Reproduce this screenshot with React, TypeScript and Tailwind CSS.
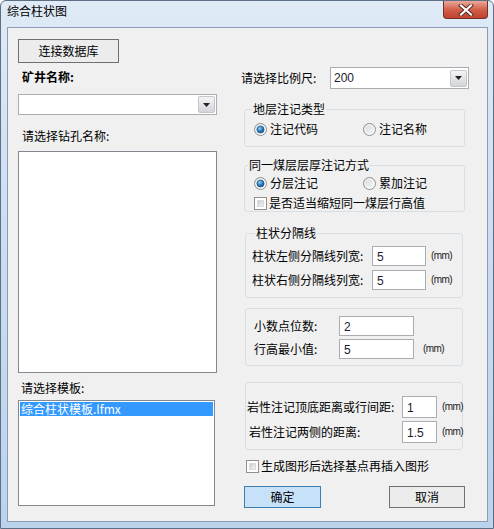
import React from "react";

const F = "font-['Noto_Sans_CJK_SC',sans-serif]";

function Radio({ checked }: { checked?: boolean }) {
  return (
    <svg width="13" height="13" viewBox="0 0 13 13" className="shrink-0">
      <defs>
        <linearGradient id="rg" x1="0" y1="0" x2="1" y2="1">
          <stop offset="0" stopColor="#d4d6d8" />
          <stop offset="1" stopColor="#fbfbfb" />
        </linearGradient>
        <radialGradient id="rb" cx="0.4" cy="0.35" r="0.7">
          <stop offset="0" stopColor="#9fd6f7" />
          <stop offset="0.5" stopColor="#2a7fc0" />
          <stop offset="1" stopColor="#1b4f7c" />
        </radialGradient>
      </defs>
      <circle cx="6.5" cy="6.5" r="6" fill="url(#rg)" stroke="#8d8f91" strokeWidth="1" />
      <circle cx="6.5" cy="6.5" r="4.6" fill="none" stroke="#ffffff" strokeWidth="0.8" />
      {checked && <circle cx="6.5" cy="6.5" r="3.6" fill="url(#rb)" stroke="#1c4f7d" strokeWidth="0.6" />}
    </svg>
  );
}

function Check() {
  return (
    <span className="w-[13px] h-[13px] shrink-0 border border-[#8f8f8f] bg-white p-[2px] flex">
      <span className="flex-1 bg-gradient-to-br from-[#c9ccd1] to-[#f4f4f4] border border-[#dadada]" />
    </span>
  );
}

function DropBtn() {
  return (
    <span className="w-[17px] h-[17px] shrink-0 rounded-[2px] border border-[#c3c6cb] bg-gradient-to-b from-[#f4f4f5] to-[#d3d5da] flex items-center justify-center">
      <svg width="7" height="4" viewBox="0 0 7 4">
        <path d="M0 0 H7 L3.5 4 Z" fill="#222" />
      </svg>
    </span>
  );
}

function Field({ value, w, h = 19 }: { value: string; w: number; h?: number }) {
  return (
    <div
      className="shrink-0 border border-[#abadb3] bg-white flex items-center pl-[4px] pt-[2px] text-[12px] font-['Liberation_Sans',sans-serif] text-[#1a1a2e]"
      style={{ width: w, height: h }}
    >
      {value}
    </div>
  );
}

function MM({ ml }: { ml: number }) {
  return (
    <span
      className="shrink-0 text-[10px] leading-[12px] tracking-[-0.6px] font-['Liberation_Sans',sans-serif] text-[#222]"
      style={{ marginLeft: ml }}
    >
      (mm)
    </span>
  );
}

export default function App() {
  return (
    <div className={`w-[494px] h-[529px] relative overflow-hidden bg-gradient-to-b from-[#dfeaf6] via-[#c9dcf1] to-[#bcd3ec] border border-[#5d6f84] rounded-t-[6px] ${F} text-[12px] text-black`}>
      {/* title bar */}
      <div className="h-[26px] flex items-start justify-between">
        <div className="pl-[6px] pt-[2px] leading-[16px] text-[12px]">综合柱状图</div>
        <div className="mr-[5px] w-[45px] h-[18px] rounded-b-[4px] border border-t-0 border-[#70332a] bg-gradient-to-b from-[#e9a99b] via-[#d2604b] to-[#c0422c] flex items-center justify-center">
          <svg width="16" height="12" viewBox="0 0 16 12">
            <path d="M3 1.5 L13 10.5 M13 1.5 L3 10.5" stroke="#5a241c" strokeWidth="4" strokeLinecap="square" />
            <path d="M3 1.5 L13 10.5 M13 1.5 L3 10.5" stroke="#ffffff" strokeWidth="2.2" strokeLinecap="square" />
          </svg>
        </div>
      </div>
      {/* client */}
      <div className="ml-[6px] w-[481px] h-[495px] border border-[#8a9db5] bg-[#f0f0f0] flex">
        {/* left column */}
        <div className="pl-[10px] w-[220px] shrink-0 flex flex-col pt-[11px]">
          <div className="w-[101px] h-[24px] border border-[#707070] bg-[#ececec] flex items-center justify-center leading-[16px]">
            连接数据库
          </div>
          <div className="mt-[6px] h-[16px] leading-[16px] pl-[4px] font-bold">矿井名称:</div>
          <div className="mt-[9px] w-[199px] h-[21px] border border-[#abadb3] bg-white flex items-center justify-end pr-[1px]">
            <DropBtn />
          </div>
          <div className="mt-[13px] h-[16px] leading-[16px] pl-[4px]">请选择钻孔名称:</div>
          <div className="mt-[7px] w-[199px] h-[222px] border border-[#828790] bg-white" />
          <div className="mt-[7px] h-[16px] leading-[16px] pl-[3px]">请选择模板:</div>
          <div className="mt-[4px] w-[197px] h-[106px] border border-[#828790] bg-white p-[1px]">
            <div className="h-[14px] bg-[#3399ff] text-white leading-[14px] pl-[1px] text-[12px]">综合柱状模板.lfmx</div>
          </div>
        </div>
        {/* right column */}
        <div className="ml-[13px] w-[228px] shrink-0 flex flex-col pt-[39px]">
          <div className="flex items-center justify-between h-[22px]">
            <span className="leading-[16px]">请选择比例尺:</span>
            <div className="w-[139px] h-[22px] border border-[#abadb3] bg-white flex items-center justify-between pl-[3px] pr-[1px]">
              <span className="font-['Liberation_Sans',sans-serif] text-[12px] text-[#1a1a2e]">200</span>
              <DropBtn />
            </div>
          </div>

          <fieldset className="ml-[3px] mt-[12px] w-[221px] h-[46px] border border-[#d5dfe5] rounded-[3px] px-[9px]">
            <legend className="px-[1px] -ml-[2px] leading-[16px]">地层注记类型</legend>
            <div className="flex items-center h-[16px] mt-[4px]">
              <span className="flex items-center gap-[3px] w-[109px]"><Radio checked />注记代码</span>
              <span className="flex items-center gap-[3px]"><Radio />注记名称</span>
            </div>
          </fieldset>

          <fieldset className="ml-[3px] mt-[10px] w-[221px] h-[55px] border border-[#d5dfe5] rounded-[3px] px-[9px]">
            <legend className="px-[1px] -ml-[6px] leading-[16px]">同一煤层层厚注记方式</legend>
            <div className="flex items-center h-[16px] mt-[2px]">
              <span className="flex items-center gap-[3px] w-[109px]"><Radio checked />分层注记</span>
              <span className="flex items-center gap-[3px]"><Radio />累加注记</span>
            </div>
            <div className="flex items-center h-[16px] mt-[4px] gap-[2px]">
              <Check />是否适当缩短同一煤层行高值
            </div>
          </fieldset>

          <fieldset className="ml-[4px] mt-[13px] w-[218px] h-[73px] border border-[#d5dfe5] rounded-[3px] pl-[6px]">
            <legend className="px-[1px] ml-[3px] leading-[16px]">柱状分隔线</legend>
            <div className="flex items-center mt-[5px]">
              <span className="w-[120px] shrink-0">柱状左侧分隔线列宽:</span>
              <Field value="5" w={54} h={20} />
              <MM ml={5} />
            </div>
            <div className="flex items-center mt-[4px]">
              <span className="w-[120px] shrink-0">柱状右侧分隔线列宽:</span>
              <Field value="5" w={54} h={20} />
              <MM ml={5} />
            </div>
          </fieldset>

          <div className="ml-[4px] mt-[10px] w-[218px] h-[58px] border border-[#d5dfe5] rounded-[3px] pl-[8px] pt-[7px]">
            <div className="flex items-center">
              <span className="w-[85px] shrink-0">小数点位数:</span>
              <Field value="2" w={75} h={20} />
            </div>
            <div className="flex items-center mt-[3px]">
              <span className="w-[85px] shrink-0">行高最小值:</span>
              <Field value="5" w={75} h={20} />
              <MM ml={9} />
            </div>
          </div>

          <div className="ml-[4px] mt-[16px] w-[218px] h-[68px] border border-[#d5dfe5] rounded-[3px] pl-[1px] pt-[13px]">
            <div className="flex items-center">
              <span className="w-[155px] shrink-0">岩性注记顶底距离或行间距:</span>
              <Field value="1" w={35} h={22} />
              <MM ml={5} />
            </div>
            <div className="flex items-center mt-[3px]">
              <span className="w-[155px] shrink-0 pl-[2px]">岩性注记两侧的距离:</span>
              <Field value="1.5" w={35} h={22} />
              <MM ml={5} />
            </div>
          </div>

          <div className="ml-[5px] mt-[8px] flex items-center gap-[2px] h-[16px]">
            <Check />生成图形后选择基点再插入图形
          </div>

          <div className="mt-[12px] flex ml-[3px] h-[22px]">
            <div className="w-[77px] h-[22px] border border-[#3c7fb1] bg-[#c7e2f8] flex items-center justify-center">确定</div>
            <div className="ml-[68px] w-[76px] h-[22px] border border-[#707070] bg-[#ececec] flex items-center justify-center">取消</div>
          </div>
        </div>
      </div>
    </div>
  );
}
